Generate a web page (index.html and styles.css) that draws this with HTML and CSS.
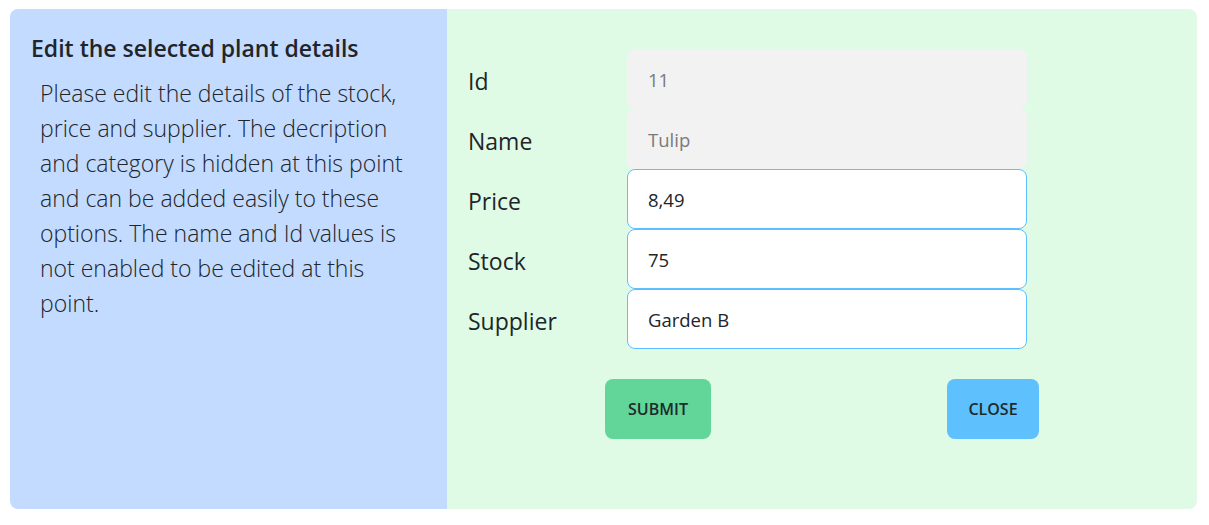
FILE: index.html
```html
<!DOCTYPE html>
<html>
<head>
<meta charset="utf-8">
<link rel="stylesheet" href="styles.css">
</head>
<body>
<div class="modal">
  <section class="info">
    <h2 class="info-title">Edit the selected plant details</h2>
    <p class="info-text">Please edit the details of the stock, price and supplier. The decription and category is hidden at this point and can be added easily to these options. The name and Id values is not enabled to be edited at this point.</p>
  </section>
  <section class="form-panel">
    <form class="form">
      <div class="row"><label class="label">Id</label><input class="field" value="11" disabled></div>
      <div class="row"><label class="label">Name</label><input class="field" value="Tulip" disabled></div>
      <div class="row"><label class="label">Price</label><input class="field" value="8,49"></div>
      <div class="row"><label class="label">Stock</label><input class="field" value="75"></div>
      <div class="row"><label class="label">Supplier</label><input class="field" value="Garden B"></div>
      <div class="actions">
        <button type="button" class="btn btn-submit">SUBMIT</button>
        <button type="button" class="btn btn-close">CLOSE</button>
      </div>
    </form>
  </section>
</div>
</body>
</html>
```
FILE: styles.css
```css
* { box-sizing: border-box; }
body {
  margin: 0;
  padding: 9px 12px 16px 10px;
  background: #ffffff;
  font-family: "Open Sans", "Noto Sans", sans-serif;
  color: #212529;
}
.modal {
  display: flex;
  height: 500px;
  border-radius: 8px;
  overflow: hidden;
}
.info {
  width: 437px;
  background: #c3dbff;
  padding: 23px 20px 0 21px;
}
.info-title {
  margin: 0;
  font-size: 23px;
  font-weight: 600;
  line-height: 32px;
  color: #212529;
}
.info-text {
  margin: 12px 0 0 9px;
  font-size: 23px;
  font-weight: 300;
  line-height: 35px;
  color: #212529;
}
.form-panel {
  flex: 1;
  background: #dffbe6;
  padding: 40px 0 0 21px;
}
.form { display: flex; flex-direction: column; }
.row {
  display: flex;
  align-items: center;
  height: 60px;
}
.label {
  width: 159px;
  padding-top: 3px;
  font-size: 23px;
  color: #212529;
}
.field {
  width: 400px;
  height: 60px;
  padding: 0 20px;
  border: 1px solid #5ebfff;
  border-radius: 8px;
  background: #ffffff;
  font-family: inherit;
  font-size: 18.5px;
  color: #212529;
  outline: none;
}
.field:disabled {
  background: #f2f2f2;
  border-color: #f2f2f2;
  color: #7a7a7a;
}
.actions {
  display: flex;
  justify-content: space-between;
  width: 434px;
  margin: 30px 0 0 137px;
}
.btn {
  height: 60px;
  border: none;
  border-radius: 8px;
  font-family: inherit;
  font-size: 16px;
  font-weight: 600;
  color: #1c2b2b;
  padding: 0;
}
.btn-submit { width: 106px; background: #62d598; }
.btn-close { width: 92px; background: #5ec0fc; }
```
